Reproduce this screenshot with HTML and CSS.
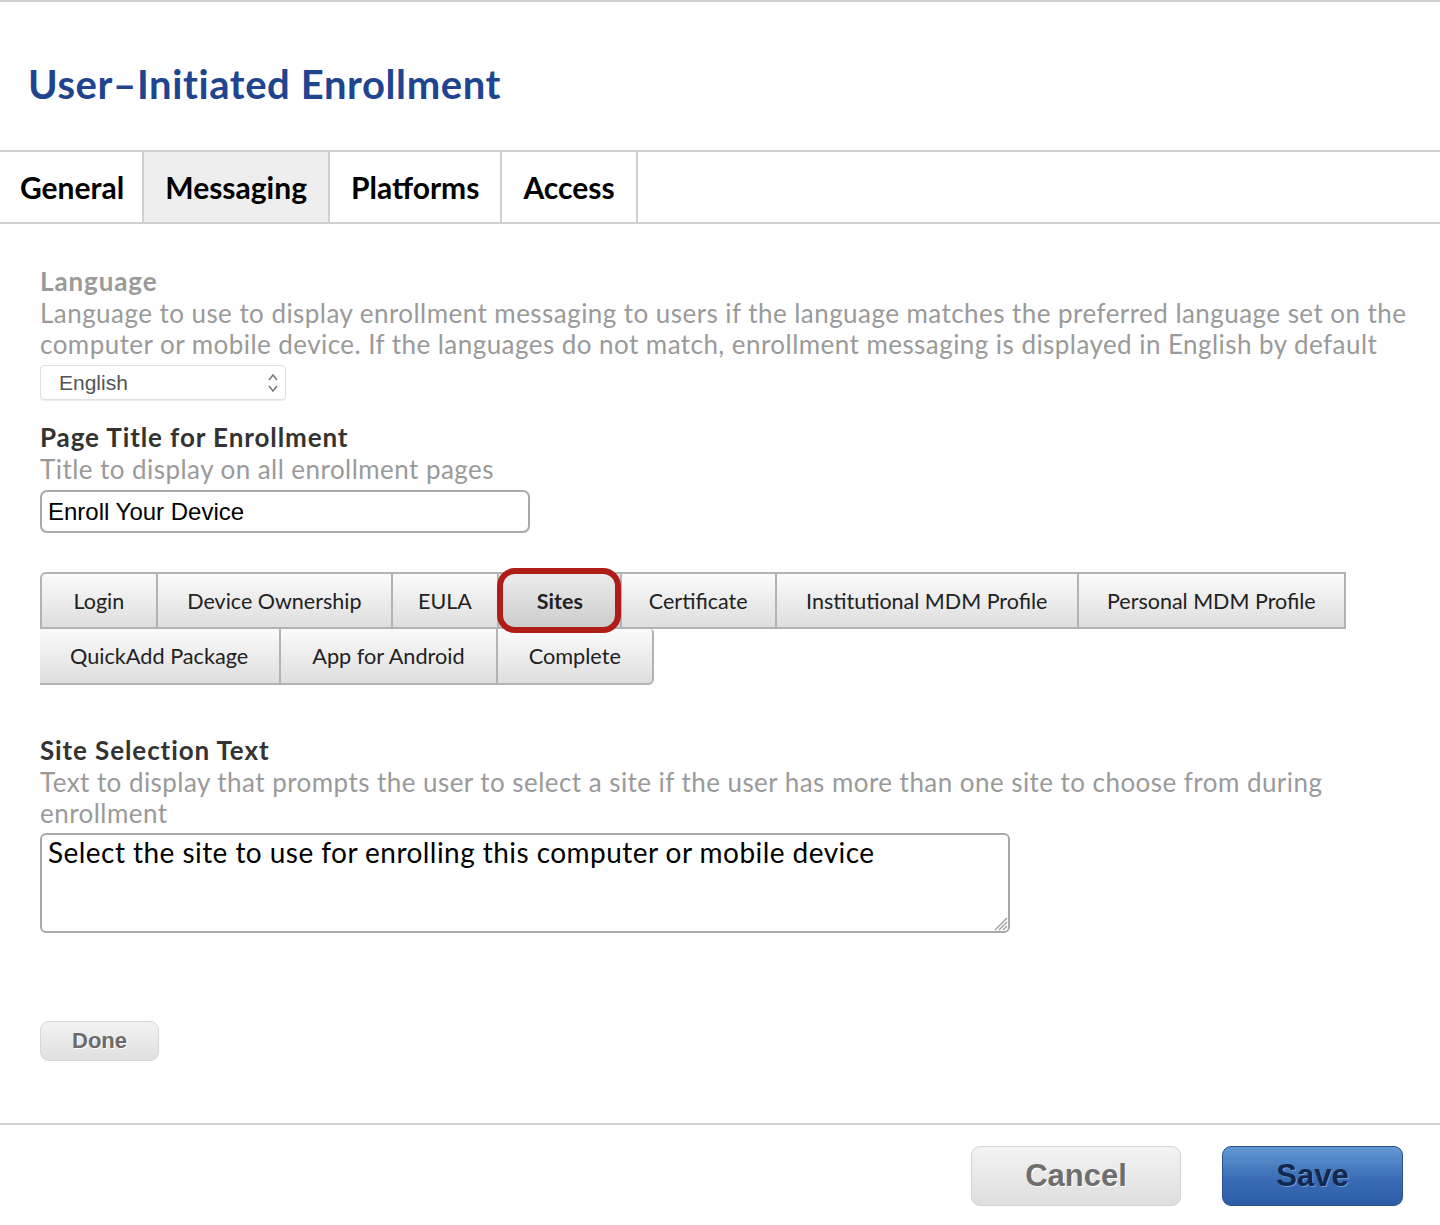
FILE: index.html
```html
<!DOCTYPE html>
<html lang="en">
<head>
<meta charset="utf-8">
<title>User-Initiated Enrollment</title>
<link rel="stylesheet" href="styles.css">
</head>
<body>
<div class="page">
  <header class="header">
    <h1 class="title">User&#8211;Initiated Enrollment</h1>
  </header>
  <nav class="tabs">
    <div class="tab">General</div>
    <div class="tab tab-active">Messaging</div>
    <div class="tab">Platforms</div>
    <div class="tab">Access</div>
  </nav>
  <main class="content">
    <section class="field">
      <div class="label label-muted">Language</div>
      <div class="desc">Language to use to display enrollment messaging to users if the language matches the preferred language set on the computer or mobile device. If the languages do not match, enrollment messaging is displayed in English by default</div>
      <div class="select">
        <span class="select-text">English</span>
        <svg class="select-arrows" width="12" height="22" viewBox="0 0 12 22"><path d="M2 8 L6 3 L10 8" fill="none" stroke="#777" stroke-width="1.5"/><path d="M2 14 L6 19 L10 14" fill="none" stroke="#777" stroke-width="1.5"/></svg>
      </div>
    </section>
    <section class="field field-title">
      <div class="label">Page Title for Enrollment</div>
      <div class="desc">Title to display on all enrollment pages</div>
      <div class="input">Enroll Your Device</div>
    </section>
    <div class="seg">
      <div class="seg-row seg-row1">
        <div class="seg-btn seg-login">Login</div>
        <div class="seg-btn">Device Ownership</div>
        <div class="seg-btn seg-eula">EULA</div>
        <div class="seg-btn seg-active">Sites</div>
        <div class="seg-btn seg-cert">Certificate</div>
        <div class="seg-btn">Institutional MDM Profile</div>
        <div class="seg-btn seg-personal">Personal MDM Profile</div>
      </div>
      <div class="seg-row seg-row2">
        <div class="seg-btn">QuickAdd Package</div>
        <div class="seg-btn">App for Android</div>
        <div class="seg-btn">Complete</div>
      </div>
    </div>
    <section class="field field-site">
      <div class="label">Site Selection Text</div>
      <div class="desc">Text to display that prompts the user to select a site if the user has more than one site to choose from during enrollment</div>
      <div class="textarea">Select the site to use for enrolling this computer or mobile device
        <svg class="grip" width="16" height="16" viewBox="0 0 16 16"><path d="M15 3 L3 15 M15 7 L7 15 M15 11 L11 15" stroke="#999" stroke-width="1.2"/></svg>
      </div>
    </section>
    <div class="done-wrap"><button class="btn-done">Done</button></div>
  </main>
  <footer class="footer">
    <button class="btn btn-cancel">Cancel</button>
    <button class="btn btn-save">Save</button>
  </footer>
</div>
</body>
</html>
```
FILE: styles.css
```css
* { box-sizing: border-box; }
html, body { margin: 0; padding: 0; background: #fff; }
body {
  font-family: Lato, "Open Sans", sans-serif;
  width: 1440px;
  height: 1225px;
  overflow: hidden;
}
.page {
  border-top: 2px solid #cfcfcf;
}
.header {
  height: 148px;
  padding: 58px 0 0 28px;
}
.title {
  margin: 0;
  font-size: 40px;
  line-height: 48px;
  font-weight: 700;
  color: #1f4591;
  letter-spacing: 0.6px;
}
.tabs {
  display: flex;
  border-top: 2px solid #cfcfcf;
  border-bottom: 2px solid #cfcfcf;
  height: 74px;
}
.tab {
  display: flex;
  align-items: center;
  padding: 0 21px 0 21px;
  font-size: 30px;
  font-weight: 700;
  color: #000;
  border-right: 2px solid #cfcfcf;
}
.tab:first-child { padding-left: 20px; padding-right: 18px; }
.tab-active { background: #eeeeee; }
.content {
  padding: 0 0 0 40px;
  height: 899px;
}
.field { padding-top: 40px; }
.label {
  font-size: 26px;
  font-weight: 700;
  line-height: 34px;
  letter-spacing: 0.9px;
  color: #333;
}
.label-muted { color: #9a9a9a; }
.desc {
  font-size: 26px;
  line-height: 31px;
  letter-spacing: 0.45px;
  color: #9a9a9a;
  max-width: 1385px;
}
.select {
  margin-top: 5px;
  width: 246px;
  height: 35px;
  border: 1px solid #e0e0e0;
  border-radius: 4px;
  display: flex;
  align-items: center;
  justify-content: space-between;
  padding: 0 6px 0 18px;
  box-shadow: 0 1px 1px rgba(0,0,0,0.08);
}
.select-text {
  font-family: "Liberation Sans", Arial, sans-serif;
  font-size: 21px;
  color: #555;
}
.field-title { padding-top: 20px; }
.input {
  margin-top: 5px;
  width: 490px;
  height: 43px;
  border: 2px solid #a9a9a9;
  border-radius: 7px;
  padding: 0 6px;
  display: flex;
  align-items: center;
  font-family: "Liberation Sans", Arial, sans-serif;
  font-size: 24px;
  color: #000;
}
.seg {
  margin-top: 39px;
}
.seg-row {
  display: flex;
}
.seg-btn {
  height: 57px;
  display: flex;
  align-items: center;
  padding: 0 31px;
  font-size: 21.7px;
  color: #222;
  background: linear-gradient(#fbfbfb, #dedede);
  border: 2px solid #b3b3b3;
  border-right: 0;
}
.seg-row1 .seg-btn { font-size: 21.5px; padding: 0 29.5px; }
.seg-row1 .seg-login { padding: 0 31.5px; }
.seg-row1 .seg-eula { padding: 0 25px; }
.seg-row1 .seg-cert { padding: 0 27px; }
.seg-row1 .seg-personal { padding: 0 28px; }
.seg-row1 .seg-btn:first-child { border-top-left-radius: 6px; }
.seg-row1 .seg-btn:last-child { border-right: 2px solid #b3b3b3; }
.seg-row2 .seg-btn { border-top: 0; height: 56px; }
.seg-row2 .seg-btn:first-child { border-left: 0; padding-left: 30px; }
.seg-row2 .seg-btn:last-child {
  border-right: 2px solid #b3b3b3;
  border-top-right-radius: 4px;
  border-bottom-right-radius: 6px;
}
.seg-row1 .seg-active {
  position: relative;
  font-weight: 700;
  padding: 0 37px 0 38px;
  background: linear-gradient(#ececec, #cdcdcd);
}
.seg-active::after {
  content: "";
  position: absolute;
  left: -2px;
  right: -1px;
  top: -6px;
  bottom: -6px;
  border: 6px solid #b01d17;
  border-radius: 18px;
}
.field-site { padding-top: 48px; }
.textarea {
  position: relative;
  margin-top: 4px;
  width: 970px;
  height: 100px;
  border: 2px solid #a9a9a9;
  border-radius: 6px;
  padding: 0 6px;
  font-size: 28px;
  line-height: 34px;
  letter-spacing: 0.45px;
  color: #000;
}
.grip {
  position: absolute;
  right: 0;
  bottom: 0;
}
.done-wrap { padding-top: 88px; }
.btn-done {
  width: 119px;
  height: 40px;
  border: 1px solid #d7d7d7;
  border-radius: 9px;
  background: linear-gradient(#f2f2f2, #e0e0e0);
  font-family: "Liberation Sans", Arial, sans-serif;
  font-weight: 700;
  font-size: 22px;
  color: #6b6b6b;
  text-shadow: 1px 1px 0 #fff;
  padding: 0;
}
.footer {
  border-top: 2px solid #cfcfcf;
  display: flex;
  justify-content: flex-end;
  gap: 41px;
  padding: 21px 37px 0 0;
}
.btn {
  height: 60px;
  border-radius: 9px;
  font-family: "Liberation Sans", Arial, sans-serif;
  font-weight: 700;
  font-size: 31px;
  padding: 0;
}
.btn-cancel {
  width: 210px;
  border: 1px solid #d5d5d5;
  background: linear-gradient(#f3f3f3, #dedede);
  color: #6e6e6e;
  text-shadow: 1px 1px 0 #fff;
}
.btn-save {
  width: 181px;
  border: 1px solid #2b528f;
  background: linear-gradient(#6299d4, #3a6db6 55%, #2d5ca7);
  color: #13284f;
  text-shadow: 1px 1px 0 #6f9ad0;
}
```
